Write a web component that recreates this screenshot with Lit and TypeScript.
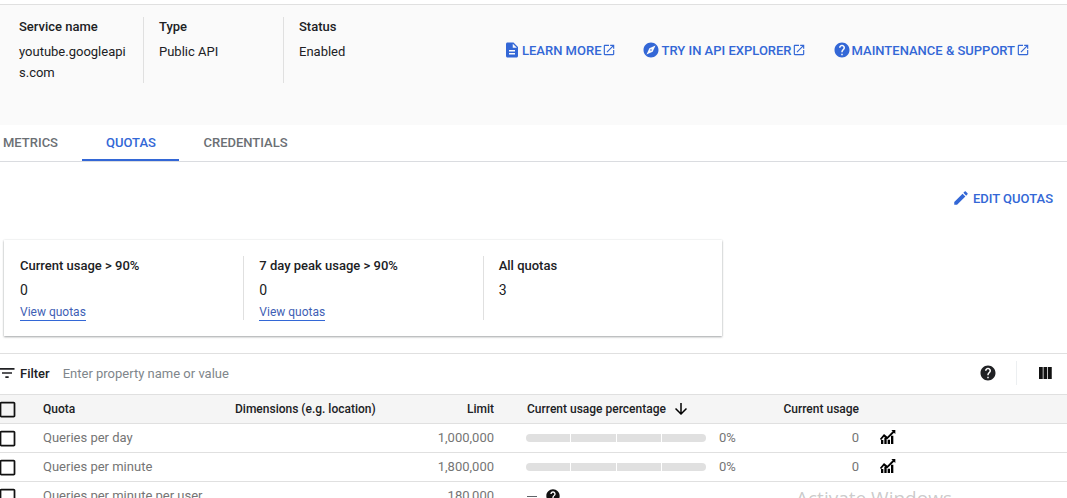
import { LitElement, html, css, svg } from 'lit';
import { customElement } from 'lit/decorators.js';

const ICONS: Record<string, string> = {
  description: 'M14 2H6c-1.1 0-1.99.9-1.99 2L4 20c0 1.1.89 2 1.99 2H18c1.1 0 2-.9 2-2V8l-6-6zm2 16H8v-2h8v2zm0-4H8v-2h8v2zm-3-5V3.5L18.5 9H13z',
  explore: 'M12 10.9c-.61 0-1.1.49-1.1 1.1s.49 1.1 1.1 1.1c.61 0 1.1-.49 1.1-1.1s-.49-1.1-1.1-1.1zM12 2C6.48 2 2 6.48 2 12s4.48 10 10 10 10-4.48 10-10S17.52 2 12 2zm2.19 12.19L6 18l3.81-8.19L18 6l-3.81 8.19z',
  help: 'M12 2C6.48 2 2 6.48 2 12s4.48 10 10 10 10-4.48 10-10S17.52 2 12 2zm1 17h-2v-2h2v2zm2.07-7.75l-.9.92C13.45 12.9 13 13.5 13 15h-2v-.5c0-1.1.45-2.1 1.17-2.83l1.24-1.26c.37-.36.59-.86.59-1.41 0-1.1-.9-2-2-2s-2 .9-2 2H8c0-2.21 1.79-4 4-4s4 1.79 4 4c0 .88-.36 1.68-.93 2.25z',
  open: 'M19 19H5V5h7V3H5c-1.11 0-2 .9-2 2v14c0 1.1.89 2 2 2h14c1.1 0 2-.9 2-2v-7h-2v7zM14 3v2h3.59l-9.83 9.83 1.41 1.41L19 6.41V10h2V3h-7z',
  edit: 'M3 17.25V21h3.75L17.81 9.94l-3.75-3.75L3 17.25zM20.71 7.04c.39-.39.39-1.02 0-1.41l-2.34-2.34c-.39-.39-1.02-.39-1.41 0l-1.83 1.83 3.75 3.75 1.83-1.83z',
  filter: 'M10 18h4v-2h-4v2zM3 6v2h18V6H3zm3 7h12v-2H6v2z',
  columns: 'M4 4h5v16H4zM10 4h5v16h-5zM16 4h5v16h-5z',
  down: 'M20 12l-1.41-1.41L13 16.17V4h-2v12.17l-5.58-5.59L4 12l8 8 8-8z',
  box: 'M19 5v14H5V5h14m0-2H5c-1.1 0-2 .9-2 2v14c0 1.1.9 2 2 2h14c1.1 0 2-.9 2-2V5c0-1.1-.9-2-2-2z',
  chart: 'M0 13l6-7 5 4 8-8-2-2h6v6l-2-2-10 10-5-4-4.5 5.2zM1.5 15h3.5v6H1.5zM6.5 11.5H10V21H6.5zM11.5 14.5H15V21h-3.5zM16.5 8.5H20V21h-3.5z',
};

function icon(name: string, size: number, cls = '') {
  return html`<svg class="icon ${cls}" width=${size} height=${size} viewBox="0 0 24 24" fill="currentColor">${svg`<path d=${ICONS[name]}></path>`}</svg>`;
}

const LINKS = [
  { icon: 'description', text: 'LEARN MORE' },
  { icon: 'explore', text: 'TRY IN API EXPLORER' },
  { icon: 'help', text: 'MAINTENANCE & SUPPORT' },
];

const ROWS = [
  { name: 'Queries per day', limit: '1,000,000' },
  { name: 'Queries per minute', limit: '1,800,000' },
];

@customElement('app-root')
export class AppRoot extends LitElement {
  static styles = css`
    :host {
      display: block;
      position: relative;
      height: 498px;
      overflow: hidden;
      background: #fff;
      font-family: Roboto, 'Liberation Sans', sans-serif;
      font-size: 13px;
      color: #202124;
    }
    .icon { display: block; flex: none; }

    .info {
      margin-top: 4px;
      height: 120px;
      border-top: 1px solid #e0e0e0;
      background: #fafafa;
      display: flex;
      align-items: flex-start;
      padding-left: 3px;
    }
    .cell {
      width: 140px;
      height: 66px;
      margin-top: 12px;
      padding: 0 16px;
      box-sizing: border-box;
      line-height: 21px;
    }
    .cell + .cell { border-left: 1px solid #e0e0e0; padding-left: 15px; }
    .cell b { display: block; font-weight: 500; margin: -1px 0 4px; line-height: 21px; }
    .cell span { display: block; word-break: break-all; }
    .links {
      display: flex;
      align-items: center;
      margin: 36px 0 0 80px;
      color: #3367d6;
      font-weight: 500;
    }
    .link { display: flex; align-items: center; }
    .link + .link { margin-left: 26.5px; }
    .link span { margin: 0 0.5px 0 1px; }

    .tabs {
      display: flex;
      height: 36px;
      border-bottom: 1px solid #dadce0;
      margin-left: -21px;
      font-weight: 500;
      color: #6b6f74;
    }
    .tab {
      padding: 0 24px;
      line-height: 36px;
      height: 36px;
      box-sizing: border-box;
    }
    .tab.active {
      width: 97px;
      margin-right: 0.5px;
      white-space: nowrap;
      color: #3367d6;
      border-bottom: 2px solid #3367d6;
    }

    .actions {
      display: flex;
      justify-content: flex-end;
      align-items: center;
      height: 36px;
      margin-top: 18px;
      padding-right: 14px;
      color: #3367d6;
      font-weight: 500;
    }
    .actions .icon { margin-right: 3px; }

    .card {
      display: flex;
      width: 718px;
      height: 96px;
      margin: 24px 0 0 4px;
      padding: 16px 0;
      box-sizing: border-box;
      background: #fff;
      box-shadow: 0 1px 2px rgba(60, 64, 67, 0.45), 0 0 2px rgba(60, 64, 67, 0.1);
    }
    .stat { width: 240px; padding-left: 15px; box-sizing: border-box; line-height: 20px; }
    .stat:first-child { width: 240px; padding-left: 16px; }
    .stat + .stat { border-left: 1px solid #e0e0e0; }
    .stat b { display: block; font-weight: 500; }
    .stat .count { display: block; font-size: 14px; margin-top: 4px; line-height: 20px; }
    .stat a {
      display: inline-block;
      margin-top: 4px;
      font-size: 12px;
      line-height: 16px;
      color: #3f5fb5;
      border-bottom: 1px solid #3367d6;
    }

    .filter {
      display: flex;
      align-items: center;
      height: 41px;
      margin-top: 17px;
      padding-bottom: 2px;
      box-sizing: border-box;
      border-top: 1px solid #e0e0e0;
      color: #202124;
    }
    .filter .lines { margin: 0 3px 0 -3px; }
    .filter b { font-weight: 500; }
    .filter .hint { margin-left: 13px; color: #80868b; flex: 1; }
    .filter .sep { width: 1px; height: 24px; background: #eceff1; margin: 0 19px; }
    .filter .cols { margin-right: 13px; color: #111; }

    .row {
      display: grid;
      grid-template-columns: 43px 192px 160px 99px 246px 119px 1fr;
      align-items: center;
      height: 29px;
      box-sizing: border-box;
      border-bottom: 1px solid #e0e0e0;
      color: #757575;
    }
    .row.head {
      height: 30px;
      border-top: 1px solid #e0e0e0;
      background: #f5f5f5;
      color: #202124;
      font-size: 12px;
      font-weight: 500;
    }
    .t { padding-bottom: 2px; }
    .box { margin-left: -3px; color: #111; }
    .num { text-align: right; }
    .pct { display: flex; align-items: center; padding-left: 32px; }
    .head .pct span { margin-left: 1px; }
    .pct .down { margin-left: 6px; color: #000; }
    .bar {
      display: flex;
      gap: 1px;
      width: 180px;
      flex: none;
      height: 8px;
      border-radius: 4px;
      overflow: hidden;
      margin-right: 13px;
    }
    .bar i { flex: 1; background: #e0e0e0; }
    .chart { margin-left: 21px; color: #000; }
    .dash { display: block; width: 10px; height: 1px; background: #5f6368; margin: 0 8px 0 1px; }
    .qhelp { color: #111; }

    .watermark {
      position: absolute;
      left: 796px;
      top: 484px;
      font-family: 'Open Sans', 'Liberation Sans', sans-serif;
      font-size: 19px;
      line-height: 28px;
      color: rgba(120, 120, 120, 0.4);
      white-space: nowrap;
    }
  `;

  renderRow(r: { name: string; limit: string }) {
    return html`
      <div class="row">
        ${icon('box', 21, 'box')}
        <span class="t">${r.name}</span>
        <span></span>
        <span class="num t">${r.limit}</span>
        <div class="pct">
          <div class="bar"><i></i><i></i><i></i><i></i></div>
          <span class="t">0%</span>
        </div>
        <span class="num t">0</span>
        ${icon('chart', 16, 'chart')}
      </div>
    `;
  }

  render() {
    return html`
      <section class="info">
        <div class="cell"><b>Service name</b><span>youtube.googleapis.com</span></div>
        <div class="cell"><b>Type</b><span>Public API</span></div>
        <div class="cell"><b>Status</b><span>Enabled</span></div>
        <div class="links">
          ${LINKS.map(
            (l) => html`<div class="link">
              ${icon(l.icon, 18)}<span>${l.text}</span>${icon('open', 14)}
            </div>`
          )}
        </div>
      </section>

      <nav class="tabs">
        <div class="tab">METRICS</div>
        <div class="tab active">QUOTAS</div>
        <div class="tab">CREDENTIALS</div>
      </nav>

      <div class="actions">${icon('edit', 18)}<span>EDIT QUOTAS</span></div>

      <section class="card">
        <div class="stat"><b>Current usage &gt; 90%</b><span class="count">0</span><a>View quotas</a></div>
        <div class="stat"><b>7 day peak usage &gt; 90%</b><span class="count">0</span><a>View quotas</a></div>
        <div class="stat"><b>All quotas</b><span class="count">3</span></div>
      </section>

      <div class="filter">
        ${icon('filter', 20, 'lines')}
        <b>Filter</b>
        <span class="hint">Enter property name or value</span>
        ${icon('help', 18)}
        <span class="sep"></span>
        ${icon('columns', 18, 'cols')}
      </div>

      <div class="row head">
        ${icon('box', 21, 'box')}
        <span>Quota</span>
        <span>Dimensions (e.g. location)</span>
        <span class="num">Limit</span>
        <div class="pct"><span>Current usage percentage</span>${icon('down', 18, 'down')}</div>
        <span class="num">Current usage</span>
        <span></span>
      </div>
      ${ROWS.map((r) => this.renderRow(r))}
      <div class="row">
        ${icon('box', 21, 'box')}
        <span class="t">Queries per minute per user</span>
        <span></span>
        <span class="num t">180,000</span>
        <div class="pct"><span class="dash"></span>${icon('help', 16, 'qhelp')}</div>
        <span></span>
        <span></span>
      </div>

      <div class="watermark">Activate Windows</div>
    `;
  }
}
